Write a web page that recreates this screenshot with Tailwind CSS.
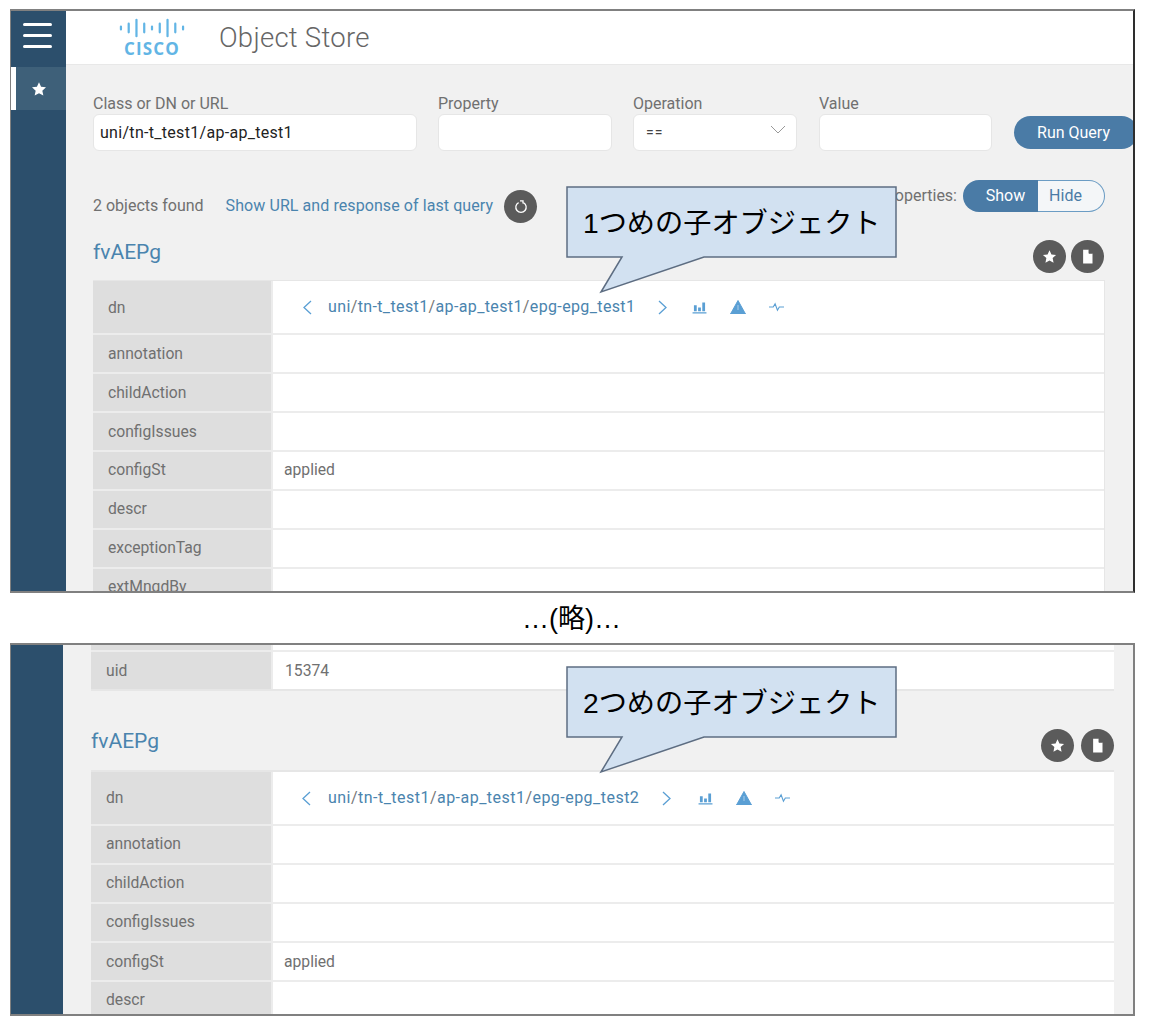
<!DOCTYPE html>
<html lang="ja">
<head>
<meta charset="utf-8">
<script src="https://cdn.jsdelivr.net/npm/@tailwindcss/browser@4"></script>
<title>Object Store</title>
</head>
<body class="bg-white font-['Roboto','Noto_Sans_CJK_JP',sans-serif] text-[#707070]">
<svg class="hidden" aria-hidden="true">
  <symbol id="star" viewBox="0 0 24 24"><path d="M12 1.8l3.1 6.9 7.4.8-5.5 5 1.5 7.4L12 18.2l-6.5 3.7L7 14.5l-5.5-5 7.4-.8z" fill="currentColor"/></symbol>
  <symbol id="file" viewBox="0 0 24 24"><path d="M5 1h9l6 6v16H5z M14 1v6h6" fill="currentColor"/><path d="M14.5 1.5v5.5h5.5" fill="none" stroke="#5b5b5b" stroke-width="1"/></symbol>
  <symbol id="bars" viewBox="0 0 16 14"><path d="M2 4.500h3V11H2zM6.500 7h3v4h-3zM11 1.500h3V11h-3zM0.500 12.200h15v1.300H.5z" fill="currentColor"/></symbol>
  <symbol id="warn" viewBox="0 0 16 14"><path d="M8 .5l7.500 13.500H.5z" fill="currentColor" stroke="currentColor" stroke-linejoin="round"/><path d="M7.500 5h1v5h-1z" fill="#a9cde9"/></symbol>
  <symbol id="pulse" viewBox="0 0 16 10"><path d="M0 5h4.500l2-3.500 2.500 7 2-3.500H16" fill="none" stroke="currentColor" stroke-width="1.200"/></symbol>
</svg>

<div class="pl-[10px] pt-[9px] w-[1158px]">

  <!-- first screen -->
  <section class="relative flex w-[1125px] h-[584px] overflow-hidden border-2 border-l border-[#808080] border-r-[#2e2e2e] bg-[#f1f1f1]">
    <aside class="w-[55px] shrink-0 bg-[#2c4f6c]">
      <div class="h-[55px] pb-[7px] pr-[3px] flex flex-col justify-center items-center gap-[8px]">
        <span class="block w-[29px] h-[3px] rounded bg-white"></span>
        <span class="block w-[29px] h-[3px] rounded bg-white"></span>
        <span class="block w-[29px] h-[3px] rounded bg-white"></span>
      </div>
      <div class="mt-[1px] h-[43px] bg-[#3e6079] border-l-[5px] border-white flex items-center justify-center pr-[4px] text-white">
        <svg class="w-[16px] h-[16px]"><use href="#star"/></svg>
      </div>
    </aside>
    <main class="flex-1 min-w-0">
      <header class="h-[54px] bg-white border-b border-[#e8e8e8] flex items-center">
        <div class="relative ml-[51px] w-[70px] h-[44px] flex flex-col items-center">
          <svg class="w-[66px] h-[20px] mt-[2px]" viewBox="0 0 68 20" aria-hidden="true">
            <g stroke="#62b5e5" stroke-width="2.300" stroke-linecap="round">
              <path d="M2 8.500v3M10 5.500v9M18 1.500v17M26 5.500v9M34 8.500v3M42 5.500v9M50 1.500v17M58 5.500v9M66 8.500v3"/>
            </g>
          </svg>
          <span class="mt-[3px] font-['Open_Sans',sans-serif] font-bold text-[17px] leading-[15px] tracking-[1.200px] text-[#62b5e5]">CISCO</span>
        </div>
        <h1 class="ml-[32px] text-[27.500px] font-light tracking-[0.250px] text-[#666]">Object Store</h1>
      </header>

      <div class="pl-[27px] pt-[29px]">
        <form class="flex items-start w-[1080px] shrink-0">
          <label class="w-[324px] mr-[21px] block text-[16px] leading-[19px]">Class or DN or URL
            <span class="mt-[1px] flex items-center h-[37px] px-[6px] bg-white rounded-[6px] border border-[#e6e6e6] text-[16px] tracking-[0.300px] text-[#222]">uni/tn-t_test1/ap-ap_test1</span>
          </label>
          <label class="w-[174px] mr-[21px] block text-[16px] leading-[19px]">Property
            <span class="mt-[1px] block h-[37px] bg-white rounded-[6px] border border-[#e6e6e6]"></span>
          </label>
          <label class="w-[164px] mr-[22px] block text-[16px] leading-[19px]">Operation
            <span class="mt-[1px] relative flex items-center h-[37px] px-[12px] bg-white rounded-[6px] border border-[#e6e6e6] text-[14px] text-[#444] tracking-[1px]">==
              <svg class="absolute right-[10px] top-[10px] w-[16px] h-[10px]" viewBox="0 0 16 10"><path d="M1 1l7 7 7-7" fill="none" stroke="#999" stroke-width="1"/></svg>
            </span>
          </label>
          <label class="w-[173px] mr-[22px] block text-[16px] leading-[19px]">Value
            <span class="mt-[1px] block h-[37px] bg-white rounded-[6px] border border-[#e6e6e6]"></span>
          </label>
          <span class="mt-[22px] w-[124px] shrink-0 h-[33px] pr-[5px] rounded-full bg-[#4a7ba6] text-white text-[16px] flex items-center justify-center">Run Query</span>
        </form>

        <div class="mt-[29px] flex justify-between items-start w-[1012px]">
          <div class="mt-[10px] flex items-center h-[33px]">
            <span class="text-[16px] relative top-[-1px]">2 objects found</span>
            <a class="ml-[22px] text-[16px] tracking-[0.080px] text-[#4a84ae] relative top-[-1px]">Show URL and response of last query</a>
            <span class="ml-[11px] w-[33px] h-[33px] rounded-full bg-[#5b5b5b] flex items-center justify-center">
              <svg class="w-[14px] h-[14px]" viewBox="0 0 14 14"><path d="M4.600 2.600a5.200 5.200 0 1 0 4.800 0" fill="none" stroke="#fff" stroke-width="1.300"/><path d="M6 .8h3v2.600" fill="none" stroke="#fff" stroke-width="1.300"/></svg>
            </span>
          </div>
          <div class="flex items-center h-[32px]">
            <span class="text-[16px] mr-[6px]">Properties:</span>
            <span class="w-[75px] h-[32px] pl-[10px] bg-[#4a7ba6] text-white text-[16px] rounded-l-full flex items-center justify-center">Show</span>
            <span class="w-[67px] h-[32px] pr-[11px] bg-[#f4f6f8] border border-l-0 border-[#6b9cc4] text-[#4a7ba6] text-[16px] rounded-r-full flex items-center justify-center">Hide</span>
          </div>
        </div>

        <div class="mt-[17px] pr-[1px] flex justify-between items-start w-[1012px]">
          <h2 class="text-[21px] leading-[24px] text-[#4a84ae]">fvAEPg</h2>
          <div class="flex gap-[5px] text-white">
            <span class="w-[33px] h-[33px] rounded-full bg-[#5b5b5b] flex items-center justify-center"><svg class="w-[15px] h-[15px]"><use href="#star"/></svg></span>
            <span class="w-[33px] h-[33px] rounded-full bg-[#5b5b5b] flex items-center justify-center"><svg class="w-[15px] h-[15px]"><use href="#file"/></svg></span>
          </div>
        </div>

        <div class="mt-[7px] w-[1012px] flex flex-col gap-[2px] bg-[#ececec] border-t border-r border-[#e6e6e6] text-[15.700px]">
          <div class="flex gap-[2px] h-[52px]">
            <div class="w-[178px] shrink-0 bg-[#dedede] pl-[15px] pt-[1px] flex items-center">dn</div>
            <div class="flex-1 bg-white flex items-center">
              <svg class="ml-[29px] w-[11px] h-[15px]" viewBox="0 0 11 15"><path d="M9 1L2 7.500 9 14" fill="none" stroke="#5a9fd4" stroke-width="1.300"/></svg>
              <span class="ml-[15px] text-[16px] tracking-[0.370px] text-[#4a84ae]">uni<span class="text-[#777]">/</span>tn-t_test1<span class="text-[#777]">/</span>ap-ap_test1<span class="text-[#777]">/</span>epg-epg_test1</span>
              <svg class="ml-[22px] w-[11px] h-[15px]" viewBox="0 0 11 15"><path d="M2 1l7 6.500L2 14" fill="none" stroke="#5a9fd4" stroke-width="1.300"/></svg>
              <svg class="ml-[24px] w-[15px] h-[13px] text-[#5a9fd4]"><use href="#bars"/></svg>
              <svg class="ml-[23px] w-[16px] h-[14px] text-[#5a9fd4]"><use href="#warn"/></svg>
              <svg class="ml-[23px] w-[15px] h-[10px] text-[#5a9fd4]"><use href="#pulse"/></svg>
            </div>
          </div>
          <div class="flex gap-[2px] h-[37px]"><div class="w-[178px] shrink-0 bg-[#dedede] pl-[15px] flex items-center">annotation</div><div class="flex-1 bg-white"></div></div>
          <div class="flex gap-[2px] h-[37px]"><div class="w-[178px] shrink-0 bg-[#dedede] pl-[15px] flex items-center">childAction</div><div class="flex-1 bg-white"></div></div>
          <div class="flex gap-[2px] h-[37px]"><div class="w-[178px] shrink-0 bg-[#dedede] pl-[15px] flex items-center">configIssues</div><div class="flex-1 bg-white"></div></div>
          <div class="flex gap-[2px] h-[37px]"><div class="w-[178px] shrink-0 bg-[#dedede] pl-[15px] pb-[1px] flex items-center">configSt</div><div class="flex-1 bg-white flex items-center pb-[1px] pl-[11px]">applied</div></div>
          <div class="flex gap-[2px] h-[37px]"><div class="w-[178px] shrink-0 bg-[#dedede] pl-[15px] pb-[1px] flex items-center">descr</div><div class="flex-1 bg-white"></div></div>
          <div class="flex gap-[2px] h-[37px]"><div class="w-[178px] shrink-0 bg-[#dedede] pl-[15px] pb-[1px] flex items-center">exceptionTag</div><div class="flex-1 bg-white"></div></div>
          <div class="flex gap-[2px] h-[37px]"><div class="w-[178px] shrink-0 bg-[#dedede] pl-[15px] pb-[1px] flex items-center">extMngdBy</div><div class="flex-1 bg-white"></div></div>
        </div>
      </div>
    </main>

    <div class="absolute left-[555px] top-[175px] w-[332px] h-[108px]">
      <svg class="absolute inset-0 w-[332px] h-[108px]" viewBox="0 0 332 108"><path d="M1 1H330V71H138L35 106 56 71H1z" fill="#d2e1f1" stroke="#5d6d82" stroke-width="1.500"/></svg>
      <span class="absolute left-[17px] top-[17px] whitespace-nowrap font-['Liberation_Sans','Noto_Sans_CJK_JP',sans-serif] text-[28.200px] leading-[40px] text-black">1つめの子オブジェクト</span>
    </div>
  </section>

  <p class="w-[1125px] h-[50px] pt-[3px] pr-[2px] flex items-center justify-center font-['Liberation_Sans','Noto_Sans_CJK_JP',sans-serif] text-[27px] text-black">…(略)…</p>

  <!-- second screen -->
  <section class="relative flex w-[1125px] h-[373px] overflow-hidden border-2 border-l border-[#808080] bg-[#f1f1f1]">
    <aside class="w-[52px] shrink-0 bg-[#2c4f6c]"></aside>
    <main class="flex-1 min-w-0 pl-[28px] text-[15.700px]">
      <div class="w-[1023px] flex flex-col gap-[2px] bg-[#ececec] border-b-2 border-[#e6e6e6]">
        <div class="flex gap-[2px] h-[5px]"><div class="w-[180px] shrink-0 bg-[#dedede]"></div><div class="flex-1 bg-white"></div></div>
        <div class="flex gap-[2px] h-[37px]"><div class="w-[180px] shrink-0 bg-[#dedede] pl-[15px] pt-[1px] flex items-center">uid</div><div class="flex-1 bg-white flex items-center pt-[1px] pl-[12px]">15374</div></div>
      </div>

      <div class="mt-[38px] flex justify-between items-start w-[1023px]">
        <h2 class="text-[21px] leading-[24px] text-[#4a84ae]">fvAEPg</h2>
        <div class="flex gap-[7px] text-white">
          <span class="w-[33px] h-[33px] rounded-full bg-[#5b5b5b] flex items-center justify-center"><svg class="w-[15px] h-[15px]"><use href="#star"/></svg></span>
          <span class="w-[33px] h-[33px] rounded-full bg-[#5b5b5b] flex items-center justify-center"><svg class="w-[15px] h-[15px]"><use href="#file"/></svg></span>
        </div>
      </div>

      <div class="mt-[8px] w-[1023px] flex flex-col gap-[2px] bg-[#ececec] border-t-2 border-[#e6e6e6]">
        <div class="flex gap-[2px] h-[52px]">
          <div class="w-[180px] shrink-0 bg-[#dedede] pl-[15px] flex items-center">dn</div>
          <div class="flex-1 bg-white flex items-center">
            <svg class="ml-[28px] w-[11px] h-[15px]" viewBox="0 0 11 15"><path d="M9 1L2 7.500 9 14" fill="none" stroke="#5a9fd4" stroke-width="1.300"/></svg>
            <span class="ml-[16px] text-[16px] tracking-[0.470px] text-[#4a84ae]">uni<span class="text-[#777]">/</span>tn-t_test1<span class="text-[#777]">/</span>ap-ap_test1<span class="text-[#777]">/</span>epg-epg_test2</span>
            <svg class="ml-[22px] w-[11px] h-[15px]" viewBox="0 0 11 15"><path d="M2 1l7 6.500L2 14" fill="none" stroke="#5a9fd4" stroke-width="1.300"/></svg>
            <svg class="ml-[26px] w-[15px] h-[13px] text-[#5a9fd4]"><use href="#bars"/></svg>
            <svg class="ml-[23px] w-[16px] h-[14px] text-[#5a9fd4]"><use href="#warn"/></svg>
            <svg class="ml-[23px] w-[15px] h-[10px] text-[#5a9fd4]"><use href="#pulse"/></svg>
          </div>
        </div>
        <div class="flex gap-[2px] h-[37px]"><div class="w-[180px] shrink-0 bg-[#dedede] pl-[15px] pb-[1px] flex items-center">annotation</div><div class="flex-1 bg-white"></div></div>
        <div class="flex gap-[2px] h-[37px]"><div class="w-[180px] shrink-0 bg-[#dedede] pl-[15px] pb-[1px] flex items-center">childAction</div><div class="flex-1 bg-white"></div></div>
        <div class="flex gap-[2px] h-[37px]"><div class="w-[180px] shrink-0 bg-[#dedede] pl-[15px] pb-[1px] flex items-center">configIssues</div><div class="flex-1 bg-white"></div></div>
        <div class="flex gap-[2px] h-[37px]"><div class="w-[180px] shrink-0 bg-[#dedede] pl-[15px] flex items-center">configSt</div><div class="flex-1 bg-white flex items-center pl-[11px]">applied</div></div>
        <div class="flex gap-[2px] h-[37px]"><div class="w-[180px] shrink-0 bg-[#dedede] pl-[15px] pb-[1px] flex items-center">descr</div><div class="flex-1 bg-white"></div></div>
      </div>
    </main>

    <div class="absolute left-[555px] top-[21px] w-[332px] h-[108px]">
      <svg class="absolute inset-0 w-[332px] h-[108px]" viewBox="0 0 332 108"><path d="M1 1H330V71H138L35 106 56 71H1z" fill="#d2e1f1" stroke="#5d6d82" stroke-width="1.500"/></svg>
      <span class="absolute left-[17px] top-[17px] whitespace-nowrap font-['Liberation_Sans','Noto_Sans_CJK_JP',sans-serif] text-[28.200px] leading-[40px] text-black">2つめの子オブジェクト</span>
    </div>
  </section>
</div>
</body>
</html>
